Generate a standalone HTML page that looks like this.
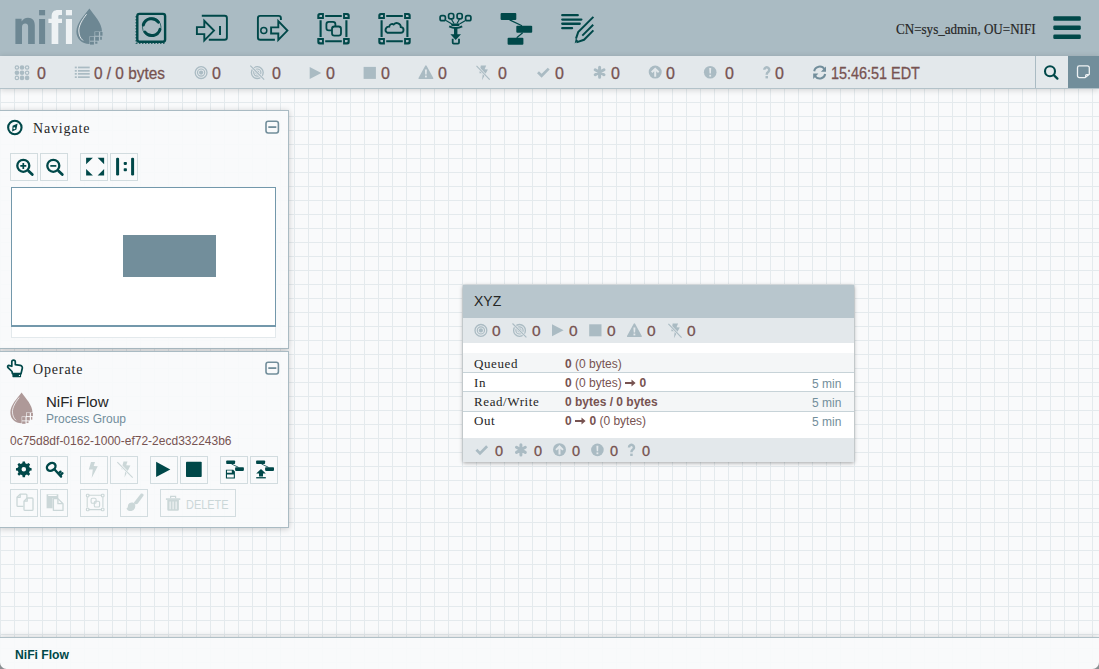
<!DOCTYPE html>
<html><head><meta charset="utf-8">
<style>
*{margin:0;padding:0;box-sizing:border-box}
html,body{width:1099px;height:669px;overflow:hidden}
body{position:relative;font-family:"Liberation Sans",sans-serif;background-color:#f9fafb;
background-image:linear-gradient(to right,#e4eaed 1px,transparent 1px),linear-gradient(to bottom,#e4eaed 1px,transparent 1px);
background-size:14px 14px;background-position:0 4px}
.a{position:absolute}
svg.ov{position:absolute;left:0;top:0;width:1099px;height:669px;overflow:visible}
#hdr{left:0;top:0;width:1099px;height:56px;background:#aabbc3}
#status{left:0;top:56px;width:1099px;height:33px;background:#e3e8eb;border-bottom:1px solid #b3c2c9;box-shadow:0 1px 6px rgba(0,0,0,0.17)}
.sv{position:absolute;top:64px;font-size:16px;font-weight:normal;-webkit-text-stroke:0.3px #775351;color:#775351;line-height:20px;white-space:nowrap;transform-origin:0 0}
.panel{position:absolute;left:-1px;width:290px;background:rgba(249,250,251,0.93);border:1px solid #aabbc3;box-shadow:0 1px 6px rgba(0,0,0,0.2)}
.ptitle{position:absolute;font-family:"Liberation Serif",serif;font-size:14px;color:#262626;letter-spacing:0.85px;white-space:nowrap;line-height:16px}
.btn{position:absolute;width:28px;height:28px;border:1px solid #d2dcdf}
.t{position:absolute;white-space:nowrap}
.sv2{font-size:15.5px;font-weight:normal;-webkit-text-stroke:0.3px #775351;color:#775351;line-height:18px}
.lbl{font-family:"Liberation Serif",serif;font-size:13px;letter-spacing:0.6px;color:#262626;line-height:16px}
.val{font-size:12px;color:#775351;line-height:16px}
.arrs{position:static;display:inline-block;vertical-align:0px;overflow:visible}
.tm{font-size:12px;color:#728e9b;line-height:16px}
</style></head>
<body>
<!-- HEADER -->
<div id="hdr" class="a"></div>
<div id="status" class="a"></div>
<div class="a" style="left:1035px;top:56px;width:1px;height:32px;background:#aabbc3"></div>
<div class="a" style="left:1068px;top:56px;width:31px;height:32px;background:#728e9b"></div>

<!-- NAVIGATE PANEL -->
<div class="panel" style="top:110px;height:239px"></div>
<div class="btn" style="left:10px;top:153px"></div>
<div class="btn" style="left:40px;top:153px"></div>
<div class="btn" style="left:80px;top:153px"></div>
<div class="btn" style="left:110px;top:153px"></div>
<div class="a" style="left:11px;top:187px;width:265px;height:140px;background:#fff;border:1px solid #7398ab;border-bottom-width:2px"></div>
<div class="a" style="left:123px;top:235px;width:93px;height:42px;background:#728e9b"></div>
<div class="a" style="left:11px;top:327px;width:265px;height:11px;background:#fff;border:1px solid #e3e9ec;border-top:none"></div>

<!-- OPERATE PANEL -->
<div class="panel" style="top:351px;height:177px"></div>
<div class="btn" style="left:10px;top:456px"></div>
<div class="btn" style="left:40px;top:456px"></div>
<div class="btn" style="left:80px;top:456px"></div>
<div class="btn" style="left:110px;top:456px"></div>
<div class="btn" style="left:150px;top:456px"></div>
<div class="btn" style="left:180px;top:456px"></div>
<div class="btn" style="left:220px;top:456px"></div>
<div class="btn" style="left:250px;top:456px"></div>
<div class="btn" style="left:10px;top:489px"></div>
<div class="btn" style="left:40px;top:489px"></div>
<div class="btn" style="left:80px;top:489px"></div>
<div class="btn" style="left:120px;top:489px"></div>
<div class="btn" style="left:160px;top:489px;width:76px"></div>

<!-- PROCESS GROUP -->
<div class="a" style="left:463px;top:285px;width:391px;height:177px;background:#fff;box-shadow:0 1px 4px rgba(0,0,0,0.35)"></div>
<div class="a" style="left:463px;top:285px;width:391px;height:33px;background:#b8c6cd"></div>
<div class="a" style="left:463px;top:318px;width:391px;height:25px;background:#e3e8eb"></div>
<div class="a" style="left:463px;top:353px;width:391px;height:20px;background:#f4f6f7;border-bottom:1px solid #c7d3d8"></div>
<div class="a" style="left:463px;top:373px;width:391px;height:19px;background:#fff;border-bottom:1px solid #c7d3d8"></div>
<div class="a" style="left:463px;top:392px;width:391px;height:20px;background:#f4f6f7;border-bottom:1px solid #c7d3d8"></div>
<div class="a" style="left:463px;top:438px;width:391px;height:24px;background:#e3e8eb"></div>

<!-- BREADCRUMBS -->
<div class="a" style="left:0;top:637px;width:1099px;height:32px;background:rgba(249,250,251,0.93);border-top:1px solid #b0c0c7;box-shadow:0 -1px 6px rgba(0,0,0,0.14)"></div>

<!-- ICON OVERLAY -->
<svg class="ov" viewBox="0 0 1099 669" style="--d:#6d8793;--b:#aabbc3;--h:#eef2f4">
<!-- logo -->
<g fill="#6d8793">
 <path d="M15.4 44V18.8H21.6V21.5C23 19.3 25 17.8 28 17.8C32.5 17.8 34.8 20.6 34.8 25.5V44H28.1V26.6C28.1 24.6 27.2 23.6 25.2 23.6C23.2 23.6 22 25 22 27V44Z"/>
 <rect x="39.1" y="19" width="6" height="25"/>
 <rect x="39.1" y="10" width="6" height="5.3"/>
</g>
<g fill="#eef2f4">
 <path d="M51.6 44V23H48.4V18.8H51.6V16.5C51.6 12 54 10 58 10H62V15.1H59.5C58.5 15.1 58.3 15.7 58.3 16.6V18.8H62V23H58.3V44Z"/>
 <rect x="65.9" y="19" width="6.1" height="25"/>
 <rect x="65.9" y="10" width="6.1" height="5.3"/>
</g>
<g id="dropicon">
<path style="fill:var(--d)" d="M89.4 8.4C94 15 102 23 102 31.5C102 39 96.5 44 89.2 44C82 44 76.4 39 76.4 31.5C76.4 23 84.5 15 89.4 8.4Z"/>
<path style="stroke:var(--h)" fill="none" stroke-width="0.9" d="M86.6 14.2C82 20 78.6 26 78.8 31C79 35.5 80.5 38.5 83 40.5"/>
<path style="fill:var(--b)" d="M89.5 46V36.2H94.5V31.4H104V46Z"/>
<g style="fill:var(--d)">
 <rect x="95.2" y="32" width="3.7" height="3.7"/><rect x="100.2" y="32" width="2.3" height="3.7"/>
 <rect x="90" y="36.8" width="3.9" height="3.9"/><rect x="95.2" y="36.8" width="3.7" height="3.9"/><rect x="100.2" y="36.8" width="1.6" height="3"/>
 <rect x="90" y="41.7" width="3.9" height="2.9"/><rect x="95.2" y="41.7" width="2.2" height="2"/>
</g>
</g>
<!-- toolbar icons -->
<g fill="none" stroke="#004849">
 <!-- processor -->
 <rect x="137.3" y="13.9" width="27.8" height="27.8" rx="2.2" stroke-width="2.4"/>
 <path d="M136.2 16V43.2H165" stroke-width="1.2" stroke-dasharray="1.5 1.5"/>
 <circle cx="151.7" cy="27.1" r="9.3" stroke-width="0.7"/>
 <path d="M143.3 25A8.5 8.5 0 0 1 158.4 22.2" stroke-width="3" stroke-linecap="round"/>
 <path d="M144.9 32A8.5 8.5 0 0 0 160 29.4" stroke-width="3" stroke-linecap="round"/>
 <!-- input port -->
 <path d="M201.8 15.7H224.6A2.3 2.3 0 0 1 226.9 18V37.4A2.3 2.3 0 0 1 224.6 39.7H208.8" stroke-width="1.9"/>
 <path d="M196.9 27.1H204.3V20.8L214 30.6L204.3 40.4V34.1H196.9Z" stroke-width="1.9" stroke-linejoin="miter"/>
 <path d="M220 25.9V35" stroke-width="2"/>
 <!-- output port -->
 <path d="M280.9 19.9V18.2A2.3 2.3 0 0 0 278.6 15.9H260.2A2.3 2.3 0 0 0 257.9 18.2V37.4A2.3 2.3 0 0 0 260.2 39.7H274.9" stroke-width="1.9"/>
 <circle cx="263.8" cy="30.5" r="3" stroke-width="1.5"/>
 <path d="M271.1 27.4H278.3V21.2L287.4 30.6L278.3 40V33.5H271.1Z" stroke-width="1.9"/>
 <!-- process group -->
 <path d="M325.2 16H341.8M325.2 41.3H341.8M320.6 20.2V36.9M346.4 20.2V36.9" stroke-width="2.1"/>
 <rect x="326.4" y="21.8" width="9" height="8.6" rx="2.4" stroke-width="1.8"/>
 <rect x="332" y="26.5" width="9" height="9.2" rx="2.4" stroke-width="1.8" fill="#aabbc3"/>
 <!-- remote pg -->
 <path d="M386.2 16H402.8M386.2 41.3H402.8M381.6 20.2V36.9M407.4 20.2V36.9" stroke-width="2.1"/>
 <path transform="translate(394.4 28.6) scale(1.1) translate(-395 -29)" d="M388.5 32.8H400.6A2.6 2.6 0 0 0 400.8 27.6A3.6 3.6 0 0 0 394.4 25.3A2.6 2.6 0 0 0 390.3 27.2A3 3 0 0 0 388.5 32.8Z" stroke-width="1.7"/>
 <!-- funnel -->
 <rect x="440.1" y="15.7" width="5.3" height="5" rx="1.8" stroke-width="1.7"/>
 <rect x="448.6" y="13.5" width="5.1" height="5.3" rx="1.8" stroke-width="1.7"/>
 <rect x="457.1" y="13.5" width="5.1" height="5.3" rx="1.8" stroke-width="1.7"/>
 <rect x="465.6" y="15.7" width="5.3" height="5" rx="1.8" stroke-width="1.7"/>
 <path d="M446 20.6L451.5 23.8M451.2 19L454 23.5M459.6 19L457 23.5M465.5 20.6L460 23.8" stroke-width="1.2"/>
 <path d="M449.2 26.3Q455.7 29.6 462.2 26.3" stroke-width="2"/>
 <path d="M452.7 38.8V42.6Q452.7 43.6 453.7 43.6H458Q459 43.6 459 42.6V38.8" stroke-width="1.8"/>
</g>
<g fill="#004849">
 <path d="M450.6 23.4H460.1L459 25.9H451.7Z"/>
 <path d="M454 28H457.4V34.2H461L455.7 39.9L450.4 34.2H454Z"/>
 <!-- PG corners -->
 <path d="M317.3 19V15.5A2.5 2.5 0 0 1 319.8 13H323.9V19ZM319.4 17H322V15H320.4A1 1 0 0 0 319.4 16Z" fill-rule="evenodd"/>
 <path d="M349.7 19V15.5A2.5 2.5 0 0 0 347.2 13H343.1V19ZM347.6 17H345V15H346.6A1 1 0 0 1 347.6 16Z" fill-rule="evenodd"/>
 <path d="M317.3 38.1V41.9A2.5 2.5 0 0 0 319.8 44.4H323.9V38.1ZM319.4 40.1H322V42.3H320.4A1 1 0 0 1 319.4 41.3Z" fill-rule="evenodd"/>
 <path d="M349.7 38.1V41.9A2.5 2.5 0 0 1 347.2 44.4H343.1V38.1ZM347.6 40.1H345V42.3H346.6A1 1 0 0 0 347.6 41.3Z" fill-rule="evenodd"/>
 <path d="M378.3 19V15.5A2.5 2.5 0 0 1 380.8 13H384.9V19ZM380.4 17H383V15H381.4A1 1 0 0 0 380.4 16Z" fill-rule="evenodd"/>
 <path d="M410.7 19V15.5A2.5 2.5 0 0 0 408.2 13H404.1V19ZM408.6 17H406V15H407.6A1 1 0 0 1 408.6 16Z" fill-rule="evenodd"/>
 <path d="M378.3 38.1V41.9A2.5 2.5 0 0 0 380.8 44.4H384.9V38.1ZM380.4 40.1H383V42.3H381.4A1 1 0 0 1 380.4 41.3Z" fill-rule="evenodd"/>
 <path d="M410.7 38.1V41.9A2.5 2.5 0 0 1 408.2 44.4H404.1V38.1ZM408.6 40.1H406V42.3H407.6A1 1 0 0 0 408.6 41.3Z" fill-rule="evenodd"/>
 <!-- template -->
 <rect x="500.6" y="12.9" width="15.7" height="7" rx="1"/>
 <rect x="516.3" y="25.8" width="15.9" height="7" rx="1"/>
 <rect x="507.6" y="37.8" width="15.8" height="7" rx="1"/>
 <!-- label -->
 <rect x="561.1" y="14" width="17.8" height="2.3" rx="1.15"/>
 <rect x="561.1" y="18.4" width="21.4" height="2.3" rx="1.15"/>
 <rect x="561.1" y="22.6" width="19.8" height="2.3" rx="1.15"/>
 <rect x="561.1" y="27" width="12.1" height="2.3" rx="1.15"/>
 <path d="M574.7 43.4L575.8 38.4L578 40.6Z"/>
 <!-- hamburger -->
 <rect x="1053.3" y="16.3" width="27.5" height="4.4" rx="1.3"/>
 <rect x="1053.3" y="25.5" width="27.5" height="4.4" rx="1.3"/>
 <rect x="1053.3" y="34.4" width="27.5" height="4.6" rx="1.3"/>
</g>
<g stroke="#004849" fill="none">
 <path d="M509.6 19.9L522 25.8M522.7 32.8L516.7 37.8" stroke-width="1.2"/>
 <path d="M593.4 16.9L578.2 32.1L576 38.6M582.3 35.6L593.2 24.8M593.4 30.4L584 39.8L576.4 42.4" stroke-width="2"/>
</g>

<!-- status bar icons -->
<g fill="#aabbc3">
 <circle cx="22" cy="67.5" r="2.3"/><circle cx="16.9" cy="72.8" r="2.3"/><circle cx="22" cy="72.8" r="2.3"/><circle cx="22" cy="77.9" r="2.3"/><circle cx="27.1" cy="77.9" r="2.3"/>
</g>
<g fill="none" stroke="#aabbc3" stroke-width="1.2">
 <circle cx="16.9" cy="67.5" r="1.7"/><circle cx="27.1" cy="67.5" r="1.7"/><circle cx="27.1" cy="72.8" r="1.7"/><circle cx="16.9" cy="77.9" r="1.7"/>
</g>
<g fill="#aabbc3">
 <rect x="74.8" y="66.6" width="2" height="1.7"/><rect x="78" y="66.6" width="11.7" height="1.7"/>
 <rect x="74.8" y="70" width="2" height="1.7"/><rect x="78" y="70" width="11.7" height="1.7"/>
 <rect x="74.8" y="73" width="2" height="1.7"/><rect x="78" y="73" width="11.7" height="1.7"/>
 <rect x="74.8" y="76.3" width="2" height="1.7"/><rect x="78" y="76.3" width="11.7" height="1.7"/>
</g>

<!-- ===== shared status icons (absolute at status bar positions) ===== -->
<defs>
<g id="i-target" fill="none" stroke="#aabbc3">
 <circle cx="201.1" cy="72.6" r="5.9" stroke-width="1.3"/>
 <circle cx="201.1" cy="72.6" r="3.6" stroke-width="1.2"/>
 <circle cx="201.1" cy="72.6" r="2.1" fill="#aabbc3" stroke="none"/>
</g>
<g id="i-notx" fill="none" stroke="#aabbc3">
 <circle cx="257.3" cy="72.6" r="5.9" stroke-width="1.3"/>
 <circle cx="257.3" cy="72.6" r="3.6" stroke-width="1.2"/>
 <circle cx="257.3" cy="72.6" r="2.1" fill="#aabbc3" stroke="none"/>
 <path d="M250.3 65.7L264.2 79.6" stroke-width="2.6" stroke="#e3e8eb"/>
 <path d="M250.3 65.7L264.2 79.6" stroke-width="1.1"/>
</g>
<path id="i-play" fill="#aabbc3" d="M309.7 66.9L321.3 72.9L309.7 78.9Z"/>
<rect id="i-stop" fill="#aabbc3" x="363.6" y="66.9" width="12.3" height="12"/>
<g id="i-warn">
 <path fill="#aabbc3" d="M425.9 65.2Q426.3 65.2 426.6 65.8L433.3 78Q433.6 78.9 432.8 78.9H419Q418.2 78.9 418.5 78L425.2 65.8Q425.5 65.2 425.9 65.2Z"/>
 <path fill="#e3e8eb" d="M424.9 69.6H426.9L426.6 74.6H425.2Z"/><rect fill="#e3e8eb" x="425" y="75.6" width="1.8" height="1.8"/>
</g>
<g id="i-inv">
 <path fill="#aabbc3" d="M480.8 65.5H486.2L484.6 69.2L487.9 69.6L482 80.2L482.9 73.2H479.4Z"/>
 <path d="M476.5 65.8L489.7 79.7" stroke="#e3e8eb" stroke-width="2.4"/>
 <path d="M476.5 65.8L489.7 79.7" stroke="#aabbc3" stroke-width="1.1"/>
</g>
<path id="i-check" d="M538 72.2L541.6 75.8L548.7 68.6" fill="none" stroke="#aabbc3" stroke-width="2.7"/>
<path id="i-ast" d="M599.6 67.2V77.3M595.2 69.7L604 74.8M595.2 74.8L604 69.7" fill="none" stroke="#aabbc3" stroke-width="3" stroke-linecap="round"/>
<g id="i-up">
 <circle fill="#aabbc3" cx="655.2" cy="72.1" r="6.5"/>
 <path fill="#e3e8eb" d="M655.2 67.4L659.4 71.6L658 72.9L656.2 71.2V76.8H654.2V71.2L652.4 72.9L651 71.6Z"/>
</g>
<g id="i-excl">
 <circle fill="#aabbc3" cx="710.2" cy="72.3" r="6.3"/>
 <path fill="#e3e8eb" d="M709.2 68.1H711.2L710.9 73.6H709.5Z"/><rect fill="#e3e8eb" x="709.3" y="74.8" width="1.8" height="1.8"/>
</g>
<path id="i-q" fill="none" stroke="#aabbc3" stroke-width="2.5" d="M764.3 69.8A2.5 2.5 0 1 1 768.4 71.7C767.2 72.5 766.7 73.1 766.7 74.7"/>
</defs>
<use href="#i-target"/><use href="#i-notx"/><use href="#i-play"/><use href="#i-stop"/><use href="#i-warn"/><use href="#i-inv"/>
<use href="#i-check"/><use href="#i-ast"/><use href="#i-up"/><use href="#i-excl"/><use href="#i-q"/>
<rect x="765.5" y="76" width="2.5" height="2.4" fill="#aabbc3"/>
<g fill="none" stroke="#728e9b" stroke-width="2">
 <path d="M814.2 71.2A5.6 5.6 0 0 1 824.5 69.3"/>
 <path d="M825.2 74A5.6 5.6 0 0 1 815 76"/>
</g>
<g fill="#728e9b">
 <path d="M826 66.6V71.8H820.9Z"/>
 <path d="M813.2 79V73.6H818.4Z"/>
</g>
<!-- search -->
<g fill="none" stroke="#004849">
 <circle cx="1050" cy="71.2" r="5" stroke-width="2.1"/>
 <path d="M1053.8 75.2L1057.4 78.6" stroke-width="2.3" stroke-linecap="round"/>
</g>
<path d="M1079.3 65.9H1087.5A1.8 1.8 0 0 1 1089.3 67.7V74.2L1085.2 77.6H1079.3A1.8 1.8 0 0 1 1077.5 75.8V67.7A1.8 1.8 0 0 1 1079.3 65.9Z" fill="none" stroke="#eef2f4" stroke-width="1.3" stroke-linejoin="round"/>
<path d="M1088.6 74.6H1086.6A1 1 0 0 0 1085.6 75.6V77.2" fill="none" stroke="#eef2f4" stroke-width="1.1"/>

<!-- ===== PG stats icons ===== -->
<use href="#i-target" transform="translate(279.8 257.8)"/>
<use href="#i-notx" transform="translate(262.2 257.8)"/>
<use href="#i-play" transform="translate(242.3 257.4)"/>
<use href="#i-stop" transform="translate(225.6 257.4)"/>
<use href="#i-warn" transform="translate(208.5 258)"/>
<use href="#i-inv" transform="translate(191.9 258)"/>
<use href="#i-check" transform="translate(-61.6 377.6)"/>
<use href="#i-ast" transform="translate(-78.7 377.6)"/>
<use href="#i-up" transform="translate(-95.7 377.6)"/>
<use href="#i-excl" transform="translate(-112.8 377.6)"/>
<use href="#i-q" transform="translate(-135.3 377.6)"/>
<rect x="630.2" y="453.6" width="2.5" height="2.4" fill="#aabbc3"/>

<!-- ===== Navigate panel icons ===== -->
<g fill="none" stroke="#004849">
 <circle cx="14.84" cy="127.5" r="6.7" stroke-width="2.1"/>
 <circle cx="23.3" cy="165.8" r="6" stroke-width="2.3"/>
 <path d="M28.6 171L32.3 174.6" stroke-width="2.8" stroke-linecap="round"/>
 <path d="M20.3 165.9H26.3M23.3 162.9V168.9" stroke-width="1.7"/>
 <circle cx="53.3" cy="165.8" r="6" stroke-width="2.3"/>
 <path d="M58.6 171L62.3 174.6" stroke-width="2.8" stroke-linecap="round"/>
 <path d="M50.3 165.9H56.3" stroke-width="1.7"/>
 <rect x="266" y="121.2" width="12.4" height="11.8" rx="2.2" stroke="#728e9b" stroke-width="1.6"/>
 <path d="M268.3 127.1H276.3" stroke="#728e9b" stroke-width="1.8"/>
 <rect x="266" y="362.2" width="12.4" height="11.8" rx="2.2" stroke="#728e9b" stroke-width="1.6"/>
 <path d="M268.3 368.1H276.3" stroke="#728e9b" stroke-width="1.8"/>
</g>
<g fill="#004849">
 <path d="M17.6 123.4L16.4 129.6L12.1 131.4L12.6 125.8Z"/>
 <circle cx="14.3" cy="128.2" r="1" fill="#fff"/>
 <path d="M86.1 157.7H92.9L86.1 164.3Z"/>
 <path d="M97.6 157.7H104.1V164.3Z"/>
 <path d="M86.1 169.1L92.9 175.5H86.1Z"/>
 <path d="M104.1 169.1V175.5H97.6Z"/>
 <rect x="116.1" y="157.7" width="3" height="17.8" rx="1.2"/>
 <rect x="131.1" y="157.7" width="3" height="17.8" rx="1.2"/>
 <rect x="123.7" y="162" width="3.2" height="2.9" rx="0.8"/>
 <rect x="123.7" y="168.2" width="3.2" height="3" rx="0.8"/>
</g>

<!-- ===== Operate panel icons ===== -->
<path fill="none" stroke="#004849" stroke-width="1.7" stroke-linejoin="round" d="M12.4 373.7L12 371.5L8 367.6C7.3 366.9 7.6 365.6 8.7 365.4L11.8 366.3V361.8C11.8 359.5 15.3 359.5 15.3 361.8V364.7L20.3 365.4C21.8 365.7 22.6 366.8 22.3 368.2L21 373.7Z"/>
<rect x="12.4" y="373.6" width="8.7" height="3.6" rx="0.6" fill="#004849"/>
<circle cx="19.4" cy="375.4" r="0.6" fill="#fff"/>

<use href="#dropicon" style="--d:#ae9998;--b:#f9fafb;--h:#f9fafb" transform="translate(21.6 392.5) scale(0.865) translate(-89.4 -8.4)"/>
<!-- gear -->
<g fill="#004849" transform="translate(23.8 469.3) scale(0.88) translate(-23.8 -470.4)">
 <path fill-rule="evenodd" d="M22.5 461.5H25.1L25.5 463.6L27.4 464.4L29.2 463.2L31 465L29.8 466.8L30.6 468.7L32.7 469.1V471.7L30.6 472.1L29.8 474L31 475.8L29.2 477.6L27.4 476.4L25.5 477.2L25.1 479.3H22.5L22.1 477.2L20.2 476.4L18.4 477.6L16.6 475.8L17.8 474L17 472.1L14.9 471.7V469.1L17 468.7L17.8 466.8L16.6 465L18.4 463.2L20.2 464.4L22.1 463.6ZM23.8 467.8A2.6 2.6 0 1 0 23.8 473A2.6 2.6 0 1 0 23.8 467.8Z"/>
</g>
<!-- key -->
<g fill="none" stroke="#004849" stroke-linecap="round">
 <ellipse cx="51.2" cy="466.9" rx="4.6" ry="3.6" transform="rotate(-35 51.2 466.9)" stroke-width="2.4"/>
 <path d="M54.6 469.5L61.1 476.6M58.4 473.6L60.5 471.6M60.1 475.5L62.5 473.2" stroke-width="2.3"/>
</g>
<!-- disabled bolt -->
<g fill="#cbd7d8">
 <path d="M91 461.9H95L93.7 465.9L97.8 466.2L91.7 477.9L92.8 469.6H88.8Z"/>
 <path d="M123.5 461.5H127.5L126.2 465.2L130.4 465.6L124.5 477.5L125.4 469.2H121.4Z"/>
</g>
<path d="M117.3 462.2L132.7 477.6" stroke="#f9fafb" stroke-width="2.4"/>
<path d="M117.3 462.2L132.7 477.6" stroke="#cbd7d8" stroke-width="1.1"/>
<!-- play / stop -->
<path fill="#004849" d="M156.1 461.8L170.3 469.5L156.1 477.1Z"/>
<rect x="186" y="461.7" width="15.7" height="15.4" rx="0.8" fill="#004849"/>
<!-- template save -->
<g fill="#004849">
 <rect x="226.2" y="460.4" width="8.9" height="3.6" rx="0.8"/>
 <rect x="235.1" y="467.3" width="8.8" height="3.6" rx="0.8"/>
 <path fill-rule="evenodd" d="M225.9 469.7H233.2L234.9 471.4V478.4H225.9ZM227 470.6V472.8H231.8V470.6ZM227 474.6V477.4H233.8V474.6Z"/>
 <rect x="256.1" y="460.4" width="9" height="3.6" rx="0.8"/>
 <rect x="265.1" y="467.3" width="8.9" height="3.6" rx="0.8"/>
 <path d="M261 469.1L265.8 473.6H263V476.6H259V473.6H256.2Z"/>
 <rect x="256.2" y="477.1" width="9.6" height="1.3"/>
</g>
<path d="M231.5 464L238.5 467.3M261.5 464L268.5 467.3" stroke="#004849" stroke-width="0.8"/>
<!-- disabled row 2 -->
<g fill="none" stroke="#cbd7d8" stroke-width="1.3" stroke-linejoin="round">
 <path d="M23.5 506.4H18Q17 506.4 17 505.4V497.3L20.2 494.1H25.9Q26.9 494.1 26.9 495.1V498"/>
 <path d="M17 497.3H20.2V494.1"/>
 <path d="M27.2 498H32Q33 498 33 499V509.4Q33 510.4 32 510.4H25Q24 510.4 24 509.4V501.2Z" fill="#f9fafb"/>
 <path d="M24 501.2H27.2V498"/>
 <path d="M53.4 498.6H57.9L63 503.7V510.4H53.4Z"/>
 <path d="M57.9 498.6V503.7H63"/>
</g>
<g fill="#cbd7d8">
 <path d="M46.6 494.2H58.3V497.9H52.6V508.2H46.6Z"/>
</g>
<rect x="48.2" y="494.8" width="8.5" height="1.2" fill="#f9fafb"/>
<!-- group disabled -->
<g fill="none" stroke="#cbd7d8" stroke-width="1.1">
 <path d="M88.6 495.3H101.2M88.6 509.6H101.2M87.2 497.3V507.6M102.9 497.3V507.6"/>
 <rect x="86.4" y="494.3" width="2.6" height="2.6" rx="0.8"/>
 <rect x="101.4" y="494.3" width="2.6" height="2.6" rx="0.8"/>
 <rect x="86.4" y="508.2" width="2.6" height="2.6" rx="0.8"/>
 <rect x="101.4" y="508.2" width="2.6" height="2.6" rx="0.8"/>
 <rect x="91.1" y="498.2" width="5" height="5" rx="1.3"/>
 <rect x="94.3" y="501.3" width="5.3" height="5.7" rx="1.3"/>
</g>
<!-- brush -->
<g fill="#cbd7d8">
 <path d="M140.8 493.8C142.3 492.6 144.4 494.4 143.3 496.1L137.8 503.6C136.9 504.8 134.2 504.6 133.8 502.8Z"/>
 <path d="M127.9 505.8C128.5 502.4 132.8 501.6 134.6 503.8C136.2 505.8 135 510.2 131.4 511C129.4 511.5 127.2 510.4 126.4 508.2C127.4 508.6 127.8 507.6 127.9 505.8Z"/>
</g>
<!-- trash -->
<g fill="#cbd7d8">
 <path d="M165.9 498.3H180.3V499.9H165.9Z"/>
 <path fill="none" stroke="#cbd7d8" stroke-width="1.2" d="M170.6 498.2V496.4H175.6V498.2"/>
 <path fill-rule="evenodd" d="M167.3 499.9H178.9V509.6Q178.9 510.8 177.7 510.8H168.5Q167.3 510.8 167.3 509.6ZM169.6 501.4V509.3H170.6V501.4ZM172.6 501.4V509.3H173.6V501.4ZM175.6 501.4V509.3H176.6V501.4Z"/>
</g>
<path d="M0 662.5A6.5 6.5 0 0 0 6.5 669H0Z" fill="#8a8f92"/>
<path d="M1099 662.5A6.5 6.5 0 0 1 1092.5 669H1099Z" fill="#8a8f92"/>
</svg>

<!-- TEXT -->
<div class="t" style="left:896px;top:21px;font-family:'Liberation Serif',serif;font-size:14px;color:#262626;line-height:17px;transform:scaleX(0.933);transform-origin:0 0;-webkit-text-stroke:0.2px #262626">CN=sys_admin, OU=NIFI</div>

<div class="sv" style="left:37px">0</div>
<div class="sv" style="left:94px;transform:scaleX(0.96)">0 / 0 bytes</div>
<div class="sv" style="left:212px">0</div>
<div class="sv" style="left:272px">0</div>
<div class="sv" style="left:326px">0</div>
<div class="sv" style="left:381px">0</div>
<div class="sv" style="left:438px">0</div>
<div class="sv" style="left:498px">0</div>
<div class="sv" style="left:555px">0</div>
<div class="sv" style="left:611px">0</div>
<div class="sv" style="left:666px">0</div>
<div class="sv" style="left:725px">0</div>
<div class="sv" style="left:775px">0</div>
<div class="sv" style="left:831px;transform:scaleX(0.9)">15:46:51 EDT</div>

<div class="ptitle" style="left:33px;top:121px">Navigate</div>
<div class="ptitle" style="left:33px;top:362px">Operate</div>

<div class="t" style="left:474px;top:293px;font-size:14px;color:#262626;line-height:16px">XYZ</div>


<div class="t" style="left:46px;top:393px;font-size:15px;color:#262626;line-height:17px">NiFi Flow</div>
<div class="t" style="left:46px;top:412px;font-size:12px;color:#728e9b;line-height:14px">Process Group</div>
<div class="t" style="left:10px;top:434px;font-size:12px;color:#775351;line-height:14px">0c75d8df-0162-1000-ef72-2ecd332243b6</div>
<div class="t" style="left:186px;top:497px;font-size:13px;color:#cbd7d8;line-height:15px;transform:scaleX(0.84);transform-origin:0 0">DELETE</div>

<div class="sv2 t" style="left:492px;top:322px">0</div>
<div class="sv2 t" style="left:532px;top:322px">0</div>
<div class="sv2 t" style="left:569px;top:322px">0</div>
<div class="sv2 t" style="left:607px;top:322px">0</div>
<div class="sv2 t" style="left:647px;top:322px">0</div>
<div class="sv2 t" style="left:687px;top:322px">0</div>
<div class="sv2 t" style="left:495px;top:442px;font-size:14.5px">0</div>
<div class="sv2 t" style="left:534px;top:442px;font-size:14.5px">0</div>
<div class="sv2 t" style="left:572px;top:442px;font-size:14.5px">0</div>
<div class="sv2 t" style="left:610px;top:442px;font-size:14.5px">0</div>
<div class="sv2 t" style="left:642px;top:442px;font-size:14.5px">0</div>

<div class="lbl t" style="left:474px;top:356px">Queued</div>
<div class="lbl t" style="left:474px;top:375px">In</div>
<div class="lbl t" style="left:474px;top:394px">Read/Write</div>
<div class="lbl t" style="left:474px;top:413px">Out</div>
<div class="val t" style="left:565px;top:356px"><b>0</b> (0 bytes)</div>
<div class="val t" style="left:565px;top:375px"><b>0</b> (0 bytes) <svg class="arrs" width="11" height="8" viewBox="0 0 11 8"><path d="M0 3.1H6.5V0.6L10.6 4L6.5 7.4V4.9H0Z" fill="#775351"/></svg> <b>0</b></div>
<div class="val t" style="left:565px;top:394px"><b>0 bytes / 0 bytes</b></div>
<div class="val t" style="left:565px;top:413px"><b>0</b> <svg class="arrs" width="11" height="8" viewBox="0 0 11 8"><path d="M0 3.1H6.5V0.6L10.6 4L6.5 7.4V4.9H0Z" fill="#775351"/></svg> <b>0</b> (0 bytes)</div>
<div class="tm t" style="left:812px;top:376px">5 min</div>
<div class="tm t" style="left:812px;top:395px">5 min</div>
<div class="tm t" style="left:812px;top:414px">5 min</div>
<div class="t" style="left:15px;top:647px;font-size:13.5px;font-weight:bold;color:#004849;line-height:16px;transform:scaleX(0.9);transform-origin:0 0">NiFi Flow</div>
</body></html>
